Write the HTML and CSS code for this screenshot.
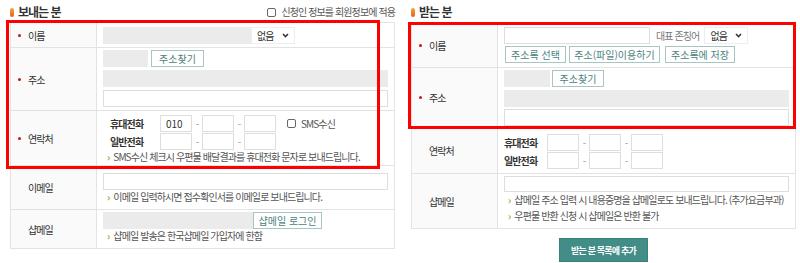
FILE: index.html
```html
<!DOCTYPE html>
<html lang="ko">
<head>
<meta charset="utf-8">
<title>보내는 분 / 받는 분</title>
<link rel="stylesheet" href="styles.css">
</head>
<body>
<div class="page">
  <section class="panel">
    <div class="panel-head">
      <h2 class="title"><span class="title-mark"></span>보내는 분</h2>
      <label class="apply"><span class="check"></span>신청인 정보를 회원정보에 적용</label>
    </div>
    <div class="form">
      <div class="row">
        <div class="label"><span class="req"></span>이름</div>
        <div class="cell l-r1">
          <div class="line">
            <input class="inp gray w148" type="text">
            <div class="sel">없음<svg width="7" height="5" viewBox="0 0 7 5"><polyline points="1,1 3.5,3.6 6,1" fill="none" stroke="#333" stroke-width="1.5"/></svg></div>
          </div>
        </div>
      </div>
      <div class="row">
        <div class="label"><span class="req"></span>주소</div>
        <div class="cell l-r2">
          <div class="line">
            <input class="inp gray zip" type="text">
            <button class="btn w53" type="button">주소찾기</button>
          </div>
          <div class="line gap3"><input class="inp gray full" type="text"></div>
          <div class="line gap3"><input class="inp full" type="text"></div>
        </div>
      </div>
      <div class="row">
        <div class="label"><span class="req"></span>연락처</div>
        <div class="cell l-r3">
          <div class="line">
            <span class="ph-label">휴대전화</span>
            <input class="inp ph" type="text" value="010">
            <span class="dash">-</span>
            <input class="inp ph" type="text">
            <span class="dash">-</span>
            <input class="inp ph" type="text">
            <label class="sms"><span class="check"></span>SMS수신</label>
          </div>
          <div class="line gap1">
            <span class="ph-label">일반전화</span>
            <input class="inp ph" type="text">
            <span class="dash">-</span>
            <input class="inp ph" type="text">
            <span class="dash">-</span>
            <input class="inp ph" type="text">
          </div>
          <p class="note">SMS수신 체크시 우편물 배달결과를 휴대전화 문자로 보내드립니다.</p>
        </div>
      </div>
      <div class="row">
        <div class="label plain">이메일</div>
        <div class="cell l-r4">
          <div class="line"><input class="inp full" type="text"></div>
          <p class="note">이메일 입력하시면 접수확인서를 이메일로 보내드립니다.</p>
        </div>
      </div>
      <div class="row">
        <div class="label plain">샵메일</div>
        <div class="cell l-r5">
          <div class="line">
            <input class="inp gray w150" type="text">
            <button class="btn w69" type="button">샵메일 로그인</button>
          </div>
          <p class="note">샵메일 발송은 한국샵메일 가입자에 한함</p>
        </div>
      </div>
    </div>
  </section>

  <section class="panel">
    <div class="panel-head">
      <h2 class="title"><span class="title-mark"></span>받는 분</h2>
    </div>
    <div class="form">
      <div class="row">
        <div class="label"><span class="req"></span>이름</div>
        <div class="cell r-r1">
          <div class="line">
            <input class="inp w146" type="text">
            <span class="honor">대표 존칭어</span>
            <div class="sel">없음<svg width="7" height="5" viewBox="0 0 7 5"><polyline points="1,1 3.5,3.6 6,1" fill="none" stroke="#333" stroke-width="1.5"/></svg></div>
          </div>
          <div class="line gap2 btns">
            <button class="btn w61" type="button">주소록 선택</button>
            <button class="btn w91" type="button">주소(파일)이용하기</button>
            <button class="btn w70" type="button">주소록에 저장</button>
          </div>
        </div>
      </div>
      <div class="row">
        <div class="label"><span class="req"></span>주소</div>
        <div class="cell r-r2">
          <div class="line">
            <input class="inp gray zip2" type="text">
            <button class="btn w52" type="button">주소찾기</button>
          </div>
          <div class="line gap3"><input class="inp gray full" type="text"></div>
          <div class="line gap2"><input class="inp full" type="text"></div>
        </div>
      </div>
      <div class="row">
        <div class="label plain">연락처</div>
        <div class="cell r-r3">
          <div class="line">
            <span class="ph-label r">휴대전화</span>
            <input class="inp ph" type="text">
            <span class="dash">-</span>
            <input class="inp ph" type="text">
            <span class="dash">-</span>
            <input class="inp ph" type="text">
          </div>
          <div class="line gap1">
            <span class="ph-label r">일반전화</span>
            <input class="inp ph" type="text">
            <span class="dash">-</span>
            <input class="inp ph" type="text">
            <span class="dash">-</span>
            <input class="inp ph" type="text">
          </div>
        </div>
      </div>
      <div class="row">
        <div class="label plain">샵메일</div>
        <div class="cell r-r4">
          <div class="line h16"><input class="inp full h16" type="text"></div>
          <p class="note tall">샵메일 주소 입력 시 내용증명을 샵메일로도 보내드립니다. (추가요금부과)</p>
          <p class="note tall">우편물 반환 신청 시 샵메일은 반환 불가</p>
        </div>
      </div>
    </div>
    <button class="add" type="button">받는 분 목록에 추가</button>
  </section>

  <div class="mark mark-left"></div>
  <div class="mark mark-right"></div>
</div>
</body>
</html>
```

FILE: styles.css
```css
* { box-sizing: border-box; }

body {
  margin: 0;
  background: #fff;
  color: #333;
  font-family: "Noto Sans CJK KR", "Noto Sans", sans-serif;
  font-size: 10px;
  letter-spacing: -0.9px;
}

.page {
  position: relative;
  display: flex;
  gap: 16px;
  padding-left: 10px;
}

.panel { width: 385px; }

.panel-head {
  height: 22px;
  display: flex;
  align-items: flex-start;
  justify-content: space-between;
}

.title {
  margin: 0;
  padding-top: 5px;
  display: flex;
  align-items: center;
  font-size: 12px;
  line-height: 14px;
  font-weight: 700;
  letter-spacing: -1px;
  color: #333;
}

.title-mark {
  width: 4px;
  height: 9px;
  border-radius: 2px;
  background: linear-gradient(#f7a24c, #de6612);
  margin-right: 4px;
}

.apply {
  margin-top: 6px;
  display: flex;
  align-items: center;
  gap: 5px;
  color: #555;
  line-height: 12px;
}

.check {
  display: inline-block;
  width: 9px;
  height: 9px;
  border: 1px solid #666;
  border-radius: 2px;
  background: #fff;
}

.form { border: 1px solid #e3e3e3; }

.row {
  display: flex;
  border-top: 1px solid #e3e3e3;
}
.row:first-child { border-top: 0; }

.label {
  width: 86px;
  flex: none;
  border-right: 1px solid #e3e3e3;
  background: #fafafa;
  display: flex;
  align-items: center;
  padding-left: 7px;
  color: #333;
}
.label.plain { padding-left: 17px; }

.req {
  width: 3px;
  height: 3px;
  border-radius: 50%;
  background: #c4161c;
  margin-right: 7px;
}

.cell {
  flex: 1;
  min-width: 0;
  padding: 0 6px;
  display: flex;
  flex-direction: column;
}

.line {
  display: flex;
  align-items: center;
  height: 17px;
}
.line.h16 { height: 16px; }
.gap1 { margin-top: 1px; }
.gap2 { margin-top: 2px; }
.gap3 { margin-top: 3px; }

.inp {
  height: 17px;
  margin: 0;
  border: 1px solid #dedede;
  background: #fff;
  padding: 0 4px;
  font: inherit;
  letter-spacing: 0;
  color: #333;
  outline: none;
}
.inp.h16 { height: 16px; }
.inp.gray { background: #ebebeb; border-color: #ebebeb; }
.full { width: 100%; }
.w146 { width: 146px; }
.w148 { width: 148px; }
.w150 { width: 150px; }
.zip { width: 45px; margin-right: 3px; }
.zip2 { width: 46px; margin-right: 2px; }

.sel {
  width: 44px;
  height: 17px;
  border: 1px solid #eee;
  background: #fff;
  display: flex;
  align-items: center;
  justify-content: space-between;
  padding: 0 5px;
}

.honor {
  margin: 0 5px 0 6px;
  color: #777;
}

.btn {
  height: 17px;
  margin: 0;
  padding: 0;
  border: 1px solid #a7c6c3;
  background: #fff;
  color: #4c827d;
  font: inherit;
  display: flex;
  align-items: center;
  justify-content: center;
}
.w52 { width: 52px; }
.w53 { width: 53px; }
.w61 { width: 61px; }
.w69 { width: 69px; }
.w70 { width: 70px; }
.w91 { width: 91px; }
.btns { padding-left: 1px; gap: 3px; }
.btns .w70 { margin-left: 2px; }

.ph-label {
  width: 50px;
  margin-left: 7px;
  font-weight: 700;
}
.ph-label.r { width: 43px; margin-left: 0; }
.ph { width: 32px; padding-left: 5px; }
.dash {
  width: 10px;
  text-align: center;
  color: #999;
}

.sms {
  margin-left: 11px;
  display: flex;
  align-items: center;
  gap: 5px;
  color: #555;
}

.note {
  margin: 0;
  height: 14px;
  line-height: 14px;
  padding-left: 4px;
  color: #555;
  white-space: nowrap;
}
.note.tall { height: 16px; line-height: 16px; }
.note::before {
  content: "›";
  color: #9aae2c;
  font-weight: 700;
  margin-right: 4px;
}

.l-r1 { padding-top: 4px; padding-bottom: 3px; }
.l-r2 { padding-top: 2px; padding-bottom: 3px; }
.l-r3 { padding-top: 4px; padding-bottom: 1px; }
.l-r4 { padding-top: 7px; padding-bottom: 5px; }
.l-r5 { padding-top: 2px; padding-bottom: 5px; }

.r-r1 { padding-top: 4px; padding-bottom: 4px; }
.r-r2 { padding-top: 2px; padding-bottom: 1px; }
.r-r3 { padding-top: 6px; padding-bottom: 4px; }
.r-r4 { padding-top: 2px; padding-bottom: 4px; }

.add {
  display: block;
  width: 89px;
  height: 24px;
  margin: 9px auto 0;
  border: 1px solid #3a807b;
  background: #428d88;
  color: #fff;
  font: inherit;
  font-size: 9px;
  font-weight: 700;
  letter-spacing: -0.8px;
  padding: 0;
}

.mark {
  position: absolute;
  border: 3px solid #f00;
  pointer-events: none;
}
.mark-left { left: 6px; top: 20px; width: 374px; height: 149px; }
.mark-right { left: 408px; top: 22px; width: 388px; height: 107px; }
```
